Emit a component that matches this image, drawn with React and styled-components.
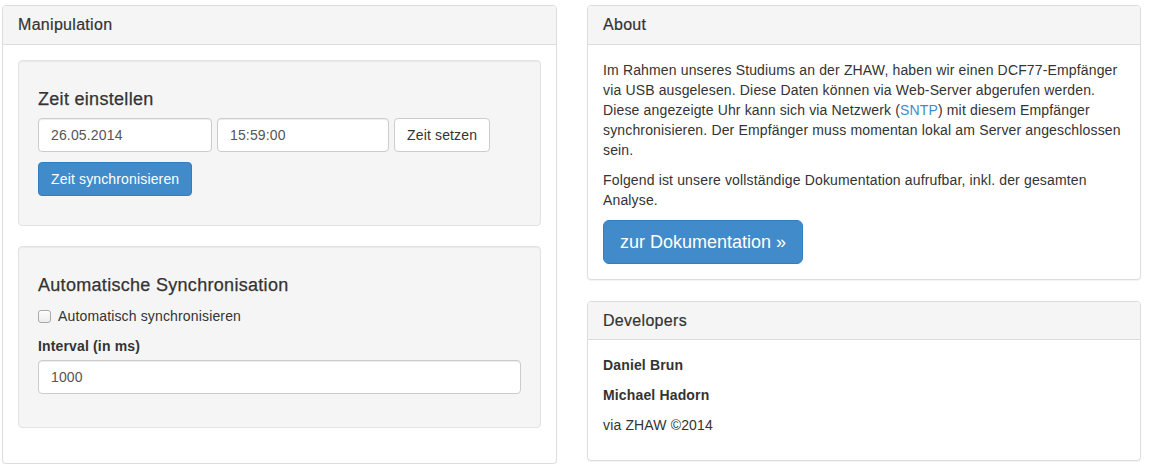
import React from "react";
import styled, { createGlobalStyle } from "styled-components";

const GlobalStyle = createGlobalStyle`
  html, body { margin: 0; padding: 0; background: #fff; }
  body {
    font-family: "Liberation Sans", Arial, Helvetica, sans-serif;
    font-size: 14px;
    line-height: 20px;
    letter-spacing: 0.15px;
    color: #333;
  }
  * { box-sizing: border-box; }
`;

const Page = styled.div`
  display: grid;
  grid-template-columns: 555px 554px;
  column-gap: 30px;
  padding: 5px 8px 0 2px;
  align-items: start;
`;

const Column = styled.div`
  display: flex;
  flex-direction: column;
  gap: 21px;
`;

const Panel = styled.section`
  background: #fff;
  border: 1px solid #ddd;
  border-radius: 4px;
  box-shadow: 0 1px 1px rgba(0, 0, 0, 0.05);
`;

const PanelHeading = styled.div`
  background: #f5f5f5;
  border-bottom: 1px solid #ddd;
  border-radius: 3px 3px 0 0;
  padding: 10px 15px;
`;

const PanelTitle = styled.h3`
  margin: 0;
  font-size: 16px;
  line-height: 17.6px;
  font-weight: 500;
  letter-spacing: 0.3px;
  -webkit-text-stroke: 0.2px #333;
  color: #333;
`;

const PanelBody = styled.div`
  padding: 15px;
`;

const Well = styled.div`
  background: #f5f5f5;
  border: 1px solid #e3e3e3;
  border-radius: 4px;
  box-shadow: inset 0 1px 1px rgba(0, 0, 0, 0.05);
  padding: 19px;
  margin-bottom: 20px;
`;

const WellTitle = styled.h4`
  margin: 10px 0 ${(p) => p.$mb || 10}px;
  font-size: 18px;
  line-height: 19.8px;
  font-weight: 500;
  letter-spacing: 0.3px;
  -webkit-text-stroke: 0.25px #333;
  color: #333;
`;

const InlineRow = styled.div`
  display: flex;
  gap: 5px;
  align-items: center;
`;

const Input = styled.input`
  display: block;
  width: ${(p) => (p.$w ? `${p.$w}px` : "100%")};
  height: 34px;
  padding: 6px 12px;
  font-family: inherit;
  font-size: 14px;
  line-height: 20px;
  letter-spacing: 0.15px;
  color: #555;
  background: #fff;
  border: 1px solid #ccc;
  border-radius: 4px;
  box-shadow: inset 0 1px 1px rgba(0, 0, 0, 0.075);
  outline: none;
`;

const Button = styled.button`
  display: inline-block;
  height: ${(p) => (p.$lg ? 44 : 34)}px;
  padding: ${(p) => (p.$lg ? "9px 16px" : "6px 12px")};
  font-family: inherit;
  font-size: ${(p) => (p.$lg ? 18 : 14)}px;
  line-height: ${(p) => (p.$lg ? 24 : 20)}px;
  letter-spacing: ${(p) => (p.$lg ? 0 : 0.15)}px;
  font-weight: 400;
  border-radius: ${(p) => (p.$lg ? 6 : 4)}px;
  border: 1px solid ${(p) => (p.$primary ? "#357ebd" : "#ccc")};
  background: ${(p) => (p.$primary ? "#428bca" : "#fff")};
  color: ${(p) => (p.$primary ? "#fff" : "#333")};
  white-space: nowrap;
  cursor: pointer;
  width: ${(p) => (p.$w ? `${p.$w}px` : "auto")};
`;

const SyncButton = styled(Button)`
  margin-top: 10px;
  margin-bottom: 10px;
`;

const CheckRow = styled.label`
  display: flex;
  align-items: center;
  gap: 7px;
  margin: 0 0 10px;
  line-height: 20px;
  color: #333;
  cursor: pointer;
`;

const Checkbox = styled.input.attrs({ type: "checkbox" })`
  appearance: none;
  -webkit-appearance: none;
  margin: 0;
  width: 13px;
  height: 13px;
  border: 1px solid #a9a9a9;
  border-radius: 3px;
  background: linear-gradient(#fdfdfd, #ececec);
  box-shadow: inset 0 1px 0 #fff;
`;

const FieldLabel = styled.label`
  display: inline-block;
  font-weight: 700;
  margin-bottom: 4px;
`;

const FormGroup = styled.div`
  margin-bottom: 14px;
`;

const Paragraph = styled.p`
  margin: 0 0 10px;
  font-weight: ${(p) => (p.$bold ? 700 : 400)};
`;

const Link = styled.a`
  color: #428bca;
  text-decoration: none;
`;

export default function App() {
  return (
    <>
      <GlobalStyle />
      <Page>
        <Column>
          <Panel>
            <PanelHeading>
              <PanelTitle>Manipulation</PanelTitle>
            </PanelHeading>
            <PanelBody>
              <Well>
                <WellTitle $mb={9}>Zeit einstellen</WellTitle>
                <InlineRow>
                  <Input $w={174} defaultValue="26.05.2014" />
                  <Input $w={172} defaultValue="15:59:00" />
                  <Button $w={96}>Zeit setzen</Button>
                </InlineRow>
                <SyncButton $primary>Zeit synchronisieren</SyncButton>
              </Well>
              <Well>
                <WellTitle>Automatische Synchronisation</WellTitle>
                <CheckRow>
                  <Checkbox />
                  Automatisch synchronisieren
                </CheckRow>
                <FieldLabel>Interval (in ms)</FieldLabel>
                <FormGroup>
                  <Input defaultValue="1000" />
                </FormGroup>
              </Well>
            </PanelBody>
          </Panel>
        </Column>
        <Column>
          <Panel>
            <PanelHeading>
              <PanelTitle>About</PanelTitle>
            </PanelHeading>
            <PanelBody>
              <Paragraph>
                Im Rahmen unseres Studiums an der ZHAW, haben wir einen
                DCF77-Empfänger via USB ausgelesen. Diese Daten können via
                Web-Server abgerufen werden. Diese angezeigte Uhr kann sich via
                Netzwerk (<Link href="#">SNTP</Link>) mit diesem Empfänger
                synchronisieren. Der Empfänger muss momentan lokal am Server
                angeschlossen sein.
              </Paragraph>
              <Paragraph>
                Folgend ist unsere vollständige Dokumentation aufrufbar, inkl.
                der gesamten Analyse.
              </Paragraph>
              <Button $primary $lg>
                zur Dokumentation »
              </Button>
            </PanelBody>
          </Panel>
          <Panel>
            <PanelHeading>
              <PanelTitle>Developers</PanelTitle>
            </PanelHeading>
            <PanelBody>
              <Paragraph $bold>Daniel Brun</Paragraph>
              <Paragraph $bold>Michael Hadorn</Paragraph>
              <Paragraph>via ZHAW ©2014</Paragraph>
            </PanelBody>
          </Panel>
        </Column>
      </Page>
    </>
  );
}
